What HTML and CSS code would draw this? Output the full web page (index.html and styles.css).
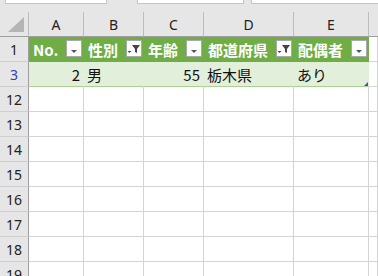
FILE: index.html
```html
<!DOCTYPE html>
<html lang="ja">
<head>
    <meta charset="UTF-8">
    <title>Filtered table</title>
    <link rel="stylesheet" href="styles.css">
</head>
<body>
    <div class="strip">
        <div class="box box1"></div>
        <div class="box box2"></div>
        <div class="box box3"></div>
    </div>
    <div class="sheet">
        <div class="corner"><svg width="18" height="16" viewBox="0 0 18 16"><polygon points="17,0 17,15 1,15" fill="#b5b5b5"/></svg></div>
        <div class="col">A</div>
        <div class="col">B</div>
        <div class="col">C</div>
        <div class="col">D</div>
        <div class="col">E</div>
        <div class="col last"></div>

        <div class="rh">1</div>
        <div class="cell th"><span>No.</span><svg class="fb" width="16" height="17" viewBox="0 0 16 17"><rect x="0.5" y="0.5" width="15" height="16" fill="#fdfdfd" stroke="#a9a9a9"/><polygon points="5,10 11,10 8,13" fill="#555"/></svg></div>
        <div class="cell th"><span>性別</span><svg class="fb" width="16" height="17" viewBox="0 0 16 17"><rect x="0.5" y="0.5" width="15" height="16" fill="#fdfdfd" stroke="#a9a9a9"/><polygon points="6,5 14,5 11,9 11,13 9,12 9,9" fill="#444"/><polygon points="1.5,11 5.5,11 3.5,13" fill="#444"/></svg></div>
        <div class="cell th"><span>年齢</span><svg class="fb" width="16" height="17" viewBox="0 0 16 17"><rect x="0.5" y="0.5" width="15" height="16" fill="#fdfdfd" stroke="#a9a9a9"/><polygon points="5,10 11,10 8,13" fill="#555"/></svg></div>
        <div class="cell th"><span>都道府県</span><svg class="fb" width="16" height="17" viewBox="0 0 16 17"><rect x="0.5" y="0.5" width="15" height="16" fill="#fdfdfd" stroke="#a9a9a9"/><polygon points="6,5 14,5 11,9 11,13 9,12 9,9" fill="#444"/><polygon points="1.5,11 5.5,11 3.5,13" fill="#444"/></svg></div>
        <div class="cell th"><span>配偶者</span><svg class="fb" width="16" height="17" viewBox="0 0 16 17"><rect x="0.5" y="0.5" width="15" height="16" fill="#fdfdfd" stroke="#a9a9a9"/><polygon points="5,10 11,10 8,13" fill="#555"/></svg></div>
        <div class="cell"></div>

        <div class="rh blue">3</div>
        <div class="cell td num">2</div>
        <div class="cell td">男</div>
        <div class="cell td num">55</div>
        <div class="cell td">栃木県</div>
        <div class="cell td end">あり<span class="handle"></span></div>
        <div class="cell"></div>

        <div class="rh">12</div><div class="cell"></div><div class="cell"></div><div class="cell"></div><div class="cell"></div><div class="cell"></div><div class="cell"></div>
        <div class="rh">13</div><div class="cell"></div><div class="cell"></div><div class="cell"></div><div class="cell"></div><div class="cell"></div><div class="cell"></div>
        <div class="rh">14</div><div class="cell"></div><div class="cell"></div><div class="cell"></div><div class="cell"></div><div class="cell"></div><div class="cell"></div>
        <div class="rh">15</div><div class="cell"></div><div class="cell"></div><div class="cell"></div><div class="cell"></div><div class="cell"></div><div class="cell"></div>
        <div class="rh">16</div><div class="cell"></div><div class="cell"></div><div class="cell"></div><div class="cell"></div><div class="cell"></div><div class="cell"></div>
        <div class="rh">17</div><div class="cell"></div><div class="cell"></div><div class="cell"></div><div class="cell"></div><div class="cell"></div><div class="cell"></div>
        <div class="rh">18</div><div class="cell"></div><div class="cell"></div><div class="cell"></div><div class="cell"></div><div class="cell"></div><div class="cell"></div>
        <div class="rh">19</div><div class="cell"></div><div class="cell"></div><div class="cell"></div><div class="cell"></div><div class="cell"></div><div class="cell"></div>
    </div>
</body>
</html>
```

FILE: styles.css
```css
* { box-sizing: border-box; }
body { margin: 0; background: #e6e6e6; font-family: "Noto Sans CJK JP", "Noto Sans", sans-serif; overflow: hidden; }

.strip { height: 12px; display: flex; }
.box { height: 4px; background: #fff; border: 1px solid #c4c4c4; border-top: none; }
.box1 { margin-left: 5px; width: 102px; }
.box2 { margin-left: 30px; width: 107px; }
.box3 { margin-left: 7px; flex: 1; border-right: none; }

.sheet { display: grid; grid-template-columns: 29px 55px 60px 60px 90px 75px 1fr; grid-auto-rows: 25px; background: #fff; }

.corner { background: #e6e6e6; border-right: 1px solid #bcbcbc; border-bottom: 1px solid #9e9e9e; display: flex; align-items: flex-end; padding: 0 0 3px 7px; }
.col { background: #e6e6e6; border-right: 1px solid #bcbcbc; border-bottom: 1px solid #9e9e9e; display: flex; align-items: center; justify-content: center; font-family: "Noto Sans", sans-serif; font-size: 14px; color: #222; }
.col.last { border-right: none; }

.rh { background: #e6e6e6; border-right: 1px solid #9e9e9e; border-bottom: 1px solid #cfcfcf; display: flex; align-items: center; justify-content: center; font-family: "Noto Sans", sans-serif; font-size: 14px; color: #222; }
.rh.blue { color: #2c3fc4; }

.cell { border-right: 1px solid #d4d4d4; border-bottom: 1px solid #d4d4d4; }

.th { background: #70ad47; border-color: #70ad47; display: flex; align-items: center; justify-content: space-between; padding: 0 1px 0 4px; color: #fff; font-weight: bold; font-size: 15px; }
.fb { flex: none; margin-top: -1px; }

.td { background: #e2efda; border-right-color: #e2efda; border-bottom-color: #a9d08e; display: flex; align-items: center; padding: 0 3px; font-size: 15px; color: #111; }
.td.num { justify-content: flex-end; }
.td.end { position: relative; }
.handle { position: absolute; right: 0; bottom: 0; width: 0; height: 0; border-left: 4px solid transparent; border-bottom: 4px solid #3b5ba5; }
```
